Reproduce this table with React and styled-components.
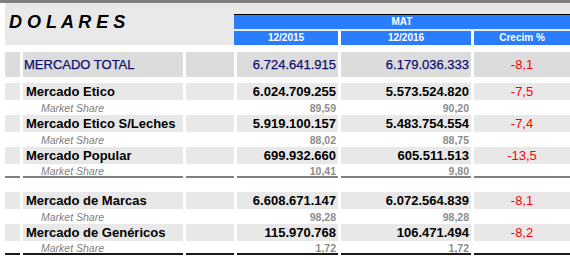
import React from 'react';
import styled, { createGlobalStyle } from 'styled-components';

const GlobalStyle = createGlobalStyle`
  body {
    margin:0;
    background:#fff;
  }
`;

const BLUE = '#2a7dff';

const total = {
  name: 'MERCADO TOTAL',
  a: '6.724.641.915',
  b: '6.179.036.333',
  g: '-8,1',
};

const groups = [
  {
    line: '#808080',
    gap: 0,
    rows: [
      { name: 'Mercado Etico', a: '6.024.709.255', b: '5.573.524.820', g: '-7,5', sa: '89,59', sb: '90,20' },
      { name: 'Mercado Etico S/Leches', a: '5.919.100.157', b: '5.483.754.554', g: '-7,4', sa: '88,02', sb: '88,75' },
      { name: 'Mercado Popular', a: '699.932.660', b: '605.511.513', g: '-13,5', sa: '10,41', sb: '9,80' },
    ],
  },
  {
    line: '#1a1a1a',
    gap: 14,
    rows: [
      { name: 'Mercado de Marcas', a: '6.608.671.147', b: '6.072.564.839', g: '-8,1', sa: '98,28', sb: '98,28' },
      { name: 'Mercado de Genéricos', a: '115.970.768', b: '106.471.494', g: '-8,2', sa: '1,72', sb: '1,72' },
    ],
  },
];

class App extends React.Component {
  renderItem(row, last, line) {
    const bottom = last ? line : null;
    return (
      <React.Fragment key={row.name}>
        <Row $h={17} $mt={1}>
          <Cell $bg="#e8e8e8" />
          <Cell $bg="#e8e8e8" $pl={3}><Label>{row.name}</Label></Cell>
          <Cell $bg="#e8e8e8" />
          <Cell $bg="#e8e8e8" $align="flex-end" $pr={2}><Value>{row.a}</Value></Cell>
          <Cell $bg="#e8e8e8" $align="flex-end" $pr={2}><Value>{row.b}</Value></Cell>
          <Cell $bg="#e8e8e8" $align="center"><Growth>{row.g}</Growth></Cell>
        </Row>
        <Row $h={13} $mt={1}>
          <Cell $line={bottom} />
          <Cell $line={bottom} $pl={18}><ShareLabel>Market Share</ShareLabel></Cell>
          <Cell $line={bottom} />
          <Cell $line={bottom} $align="flex-end" $pr={2}><ShareValue>{row.sa}</ShareValue></Cell>
          <Cell $line={bottom} $align="flex-end" $pr={2}><ShareValue>{row.sb}</ShareValue></Cell>
          <Cell $line={bottom} />
        </Row>
      </React.Fragment>
    );
  }

  render() {
    return (
      <Page>
        <GlobalStyle />
        <TopBar />
        <Header>
          <Title>D O L A R E S</Title>
          <BlueBlock>
            <Mat>MAT</Mat>
            <SubRow>
              <SubCell $w="104px">12/2015</SubCell>
              <SubCell $w="130px">12/2016</SubCell>
              <SubCell>Crecim %</SubCell>
            </SubRow>
          </BlueBlock>
        </Header>
        <Body>
          <Row $h={25}>
            <Cell $bg="#dcdcdc" />
            <Cell $bg="#dcdcdc" $pl={1}><TotalText>{total.name}</TotalText></Cell>
            <Cell $bg="#dcdcdc" />
            <Cell $bg="#dcdcdc" $align="flex-end" $pr={2}><TotalText>{total.a}</TotalText></Cell>
            <Cell $bg="#dcdcdc" $align="flex-end" $pr={2}><TotalText>{total.b}</TotalText></Cell>
            <Cell $bg="#dcdcdc" $align="center"><Growth>{total.g}</Growth></Cell>
          </Row>
          <Spacer $h={5} />
          {groups.map((grp, gi) => (
            <Group key={gi} $gap={grp.gap}>
              {grp.rows.map((r, i) => this.renderItem(r, i === grp.rows.length - 1, grp.line))}
            </Group>
          ))}
        </Body>
      </Page>
    );
  }
}

const Page = styled.div`
  width:570px;
  height:260px;
  overflow:hidden;
  background:#fff;
  font-family:"Liberation Sans", Arial, sans-serif;
`;

const TopBar = styled.div`
  height:3px;
  background:#7f7f7f;
`;

const Header = styled.div`
  margin-left:5px;
  height:42px;
  background:#e9e9e9;
  display:flex;
`;

const Title = styled.div`
  width:225px;
  padding:9px 0 0 4px;
  font-size:18px;
  line-height:20px;
  font-weight:bold;
  font-style:italic;
  color:#000;
  white-space:pre;
`;

const BlueBlock = styled.div`
  flex:1;
  margin-top:11px;
  border-top:1px solid #000;
  display:flex;
  flex-direction:column;
`;

const Mat = styled.div`
  height:14px;
  line-height:14px;
  background:${BLUE};
  color:#fff;
  font-size:10px;
  font-weight:bold;
  text-align:center;
`;

const SubRow = styled.div`
  margin-top:2px;
  height:14px;
  display:flex;
  gap:3px;
  background:#fff;
`;

const SubCell = styled.div`
  ${p => (p.$w ? `width:${p.$w};` : 'flex:1;')}
  background:${BLUE};
  color:#fff;
  font-size:10px;
  font-weight:bold;
  line-height:14px;
  text-align:center;
`;

const Body = styled.div`
  margin:7px 0 0 5px;
`;

const Group = styled.div`
  margin-top:${p => p.$gap}px;
`;

const Row = styled.div`
  display:grid;
  grid-template-columns:15px 160px 48px 101px 130px 1fr;
  column-gap:3px;
  height:${p => p.$h}px;
  margin-top:${p => p.$mt || 0}px;
`;

const Cell = styled.div`
  display:flex;
  align-items:center;
  justify-content:${p => p.$align || 'flex-start'};
  padding-left:${p => p.$pl || 0}px;
  padding-right:${p => p.$pr || 0}px;
  background:${p => p.$bg || '#fff'};
  border-bottom:${p => (p.$line ? `2px solid ${p.$line}` : 'none')};
  white-space:nowrap;
  overflow:hidden;
`;

const Spacer = styled.div`
  height:${p => p.$h}px;
`;

const TotalText = styled.span`
  font-size:13px;
  color:#0e0e6e;
  -webkit-text-stroke:0.25px #0e0e6e;
`;

const Label = styled.span`
  font-size:13px;
  font-weight:bold;
  color:#000;
`;

const Value = styled.span`
  font-size:13px;
  font-weight:bold;
  color:#000;
`;

const Growth = styled.span`
  font-size:13px;
  color:#ff0000;
`;

const ShareLabel = styled.span`
  font-size:10.5px;
  font-style:italic;
  color:#808080;
`;

const ShareValue = styled.span`
  font-size:10.5px;
  font-weight:bold;
  color:#8c8c8c;
`;

export default App;
